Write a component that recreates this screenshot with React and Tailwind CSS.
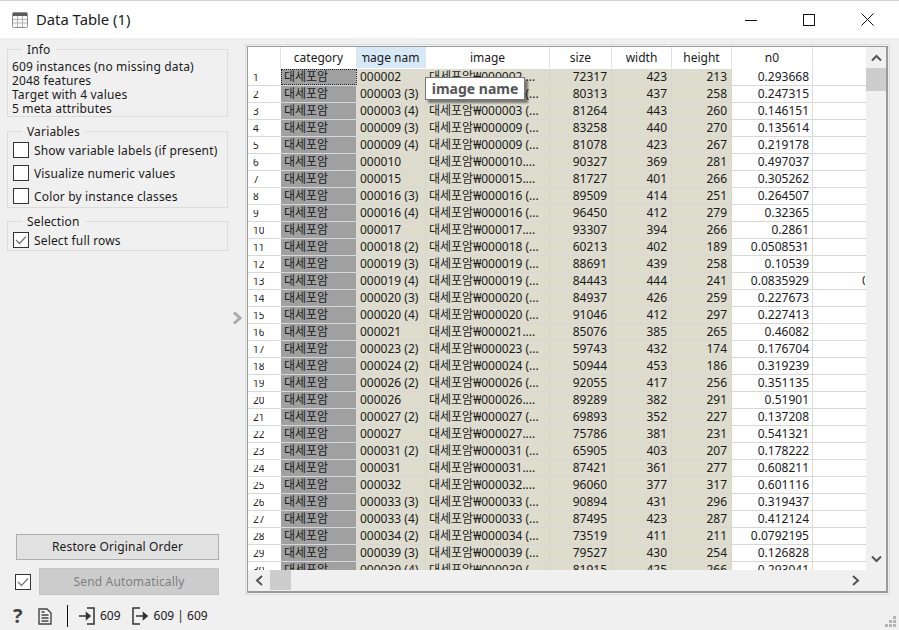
import React from "react";

const raw = `000002|72317|423|213|0.293668
000003 (3)|80313|437|258|0.247315
000003 (4)|81264|443|260|0.146151
000009 (3)|83258|440|270|0.135614
000009 (4)|81078|423|267|0.219178
000010|90327|369|281|0.497037
000015|81727|401|266|0.305262
000016 (3)|89509|414|251|0.264507
000016 (4)|96450|412|279|0.32365
000017|93307|394|266|0.2861
000018 (2)|60213|402|189|0.0508531
000019 (3)|88691|439|258|0.10539
000019 (4)|84443|444|241|0.0835929
000020 (3)|84937|426|259|0.227673
000020 (4)|91046|412|297|0.227413
000021|85076|385|265|0.46082
000023 (2)|59743|432|174|0.176704
000024 (2)|50944|453|186|0.319239
000026 (2)|92055|417|256|0.351135
000026|89289|382|291|0.51901
000027 (2)|69893|352|227|0.137208
000027|75786|381|231|0.541321
000031 (2)|65905|403|207|0.178222
000031|87421|361|277|0.608211
000032|96060|377|317|0.601116
000033 (3)|90894|431|296|0.319437
000033 (4)|87495|423|287|0.412124
000034 (2)|73519|411|211|0.0792195
000039 (3)|79527|430|254|0.126828
000039 (4)|81915|425|266|0.293041`;

const rows = raw.split("\n").map((l) => l.split("|"));

function imageText(name) {
  const [id, suffix] = name.split(" ");
  return suffix ? `대세포암₩${id} (...` : `대세포암₩${id}....`;
}

function Group({ title, className = "", children }) {
  return (
    <fieldset className={`border border-[#dcdcdc] ml-[7px] w-[221px] tracking-[0.16px] ${className}`}>
      <legend className="ml-[14px] px-[5px] leading-[13px] h-[13px] text-[#1a1a1a]">{title}</legend>
      {children}
    </fieldset>
  );
}

function Check({ label, checked }) {
  return (
    <div className="flex items-center h-[23px]">
      <div className="w-[16px] h-[16px] ml-[5px] mr-[5px] border border-[#333333] bg-white flex items-center justify-center shrink-0">
        {checked && (
          <svg width="12" height="10" viewBox="0 0 12 10" fill="none" stroke="#777777" strokeWidth="1.3">
            <path d="M1 5l3.5 3.5L11 1.5" />
          </svg>
        )}
      </div>
      <span className="whitespace-nowrap pt-[2px]">{label}</span>
    </div>
  );
}

function Header({ w, label, active, clip }) {
  return (
    <div className={`${w} h-full shrink-0 flex justify-center items-center overflow-hidden border-r border-[#e3e3e3] ${active ? "bg-[#d7e9f7]" : "bg-white"}`}>
      <div className={`flex justify-center overflow-hidden ${clip || ""}`}>
        <span className="shrink-0 whitespace-nowrap">{label}</span>
      </div>
    </div>
  );
}

function Row({ r, i }) {
  const cell = "h-full shrink-0 flex items-center whitespace-nowrap overflow-hidden border-r";
  const beige = "bg-[#dddccd] border-[#d6d6cc]";
  return (
    <div className="flex h-[17px] shrink-0 border-b border-[#d8d8d8]">
      <div className="w-[33px] h-full shrink-0 bg-white flex items-center pl-[5px]">
        <span className="block h-[7px] overflow-hidden text-[10px] leading-[7px] text-[#222222]">{i + 1}</span>
      </div>
      <div className={`${cell} w-[76px] bg-[#a0a0a0] border-[#dcdcdc] pl-[3px] ${i === 0 ? "outline-1 outline-dotted outline-offset-[-1px] outline-[#222222]" : ""}`}>대세포암</div>
      <div className={`${cell} w-[69px] pl-[3px] ${beige}`}>{r[0]}</div>
      <div className={`${cell} w-[124px] pl-[3px] ${beige}`}>{imageText(r[0])}</div>
      <div className={`${cell} w-[62px] justify-end pr-[4px] ${beige}`}>{r[1]}</div>
      <div className={`${cell} w-[60px] justify-end pr-[4px] ${beige}`}>{r[2]}</div>
      <div className={`${cell} w-[60px] justify-end pr-[4px] ${beige}`}>{r[3]}</div>
      <div className={`${cell} w-[81px] justify-end pr-[3px] bg-white border-[#dcdcdc]`}>{r[4]}</div>
      <div className="h-full shrink-0 w-[52px] bg-white flex items-center overflow-hidden whitespace-nowrap pl-[49px]">{i === 12 ? "0" : ""}</div>
    </div>
  );
}

export default function App() {
  return (
    <div
      className="w-[899px] h-[630px] overflow-hidden bg-[#f0f0f0] flex flex-col text-[12px] text-[#1a1a1a]"
      style={{ fontFamily: '"Noto Sans", "Noto Sans CJK KR", sans-serif' }}
    >
      {/* Title bar */}
      <div className="h-[38px] bg-white flex items-center shrink-0 border-t border-[#8a8a8a]/40">
        <svg className="ml-[12px]" width="16" height="16" viewBox="0 0 16 16" fill="none">
          <rect x="0.5" y="0.5" width="15" height="15" rx="1" fill="#fafafa" stroke="#8f8f8f" />
          <rect x="1" y="1" width="14" height="3" fill="#5c5c5c" />
          <path d="M1 7.5h14M1 11h14M5.5 4v11M10.5 4v11" stroke="#b5b5b5" />
        </svg>
        <span className="ml-[8px] text-[14.8px] text-[#1a1a1a]">Data Table (1)</span>
        <div className="ml-auto flex mr-[2px] h-full items-center">
          <div className="w-[58px] flex justify-center">
            <svg width="12" height="12" viewBox="0 0 12 12"><path d="M0 6.5h12" stroke="#111" /></svg>
          </div>
          <div className="w-[58px] flex justify-center">
            <svg width="12" height="12" viewBox="0 0 12 12"><rect x="0.5" y="0.5" width="11" height="11" fill="none" stroke="#111" /></svg>
          </div>
          <div className="w-[59px] flex justify-center">
            <svg width="13" height="13" viewBox="0 0 13 13"><path d="M0.5 0.5l12 12M12.5 0.5l-12 12" stroke="#111" fill="none" /></svg>
          </div>
        </div>
      </div>

      {/* Main */}
      <div className="flex h-[559px] shrink-0">
        {/* Controls */}
        <div className="w-[228px] shrink-0 flex flex-col">
          <Group title="Info" className="mt-[5px] h-[74px]">
            <div className="pl-[4px] leading-[14px] pt-[4px]">
              <div>609 instances (no missing data)</div>
              <div>2048 features</div>
              <div>Target with 4 values</div>
              <div>5 meta attributes</div>
            </div>
          </Group>
          <Group title="Variables" className="mt-[8px] h-[83px]">
            <Check label="Show variable labels (if present)" />
            <Check label="Visualize numeric values" />
            <Check label="Color by instance classes" />
          </Group>
          <Group title="Selection" className="mt-[7px] h-[36px]">
            <Check label="Select full rows" checked />
          </Group>

          <div className="mt-auto mb-[2px] ml-[15px]">
            <div className="ml-px w-[203px] h-[26px] bg-[#e1e1e1] border border-[#adadad] flex items-center justify-center tracking-[0.16px]">Restore Original Order</div>
            <div className="flex items-center mt-[8px]">
              <div className="w-[16px] h-[16px] border border-[#333333] bg-white flex items-center justify-center">
                <svg width="12" height="10" viewBox="0 0 12 10" fill="none" stroke="#777777" strokeWidth="1.3">
                  <path d="M1 5l3.5 3.5L11 1.5" />
                </svg>
              </div>
              <div className="ml-[8px] w-[180px] h-[27px] bg-[#cccccc] border border-[#c4c4c4] text-[#7f7f7f] flex items-center justify-center tracking-[0.16px]">Send Automatically</div>
            </div>
          </div>
        </div>

        {/* Splitter handle */}
        <div className="w-[17px] shrink-0 flex items-center justify-center">
          <svg className="mt-[1px] ml-[2px]" width="11" height="14" viewBox="0 0 11 14" fill="none">
            <path d="M2 1.5L8 7l-6 5.5" stroke="#a9a9a9" strokeWidth="3" />
          </svg>
        </div>

        {/* Table frame */}
        <div className="w-[645px] h-[551px] mt-[6px] border border-[#dcdcdc] p-[1px] shrink-0">
          <div className="relative w-full h-full border-2 border-l-1 border-t-1 border-[#9a9a9a] flex bg-[#f0f0f0] overflow-hidden">
            <div className="flex flex-col flex-1 min-w-0 relative">
              {/* Grid */}
              <div className="h-[523px] flex flex-col overflow-hidden bg-white">
                <div className="flex h-[22px] shrink-0 border-b border-transparent">
                  <Header w="w-[33px]" label="" />
                  <Header w="w-[76px]" label="category" />
                  <Header w="w-[69px]" label="image name" active clip="w-[58px]" />
                  <Header w="w-[124px]" label="image" />
                  <Header w="w-[62px]" label="size" />
                  <Header w="w-[60px]" label="width" />
                  <Header w="w-[60px]" label="height" />
                  <Header w="w-[81px]" label="n0" />
                  <div className="w-[52px] shrink-0 bg-white" />
                </div>
                {rows.map((r, i) => (
                  <Row key={i} r={r} i={i} />
                ))}
              </div>
              {/* Horizontal scrollbar */}
              <div className="h-[20px] shrink-0 bg-[#f0f0f0] flex items-center">
                <div className="w-[22px] flex justify-center">
                  <svg width="9" height="11" viewBox="0 0 9 11" fill="none"><path d="M7 1L2 5.5 7 10" stroke="#555555" strokeWidth="2" /></svg>
                </div>
                <div className="w-[21px] h-full bg-[#cdcdcd]" />
                <div className="ml-auto w-[22px] flex justify-center">
                  <svg width="9" height="11" viewBox="0 0 9 11" fill="none"><path d="M2 1l5 4.5L2 10" stroke="#555555" strokeWidth="2" /></svg>
                </div>
              </div>
            </div>
            {/* Vertical scrollbar */}
            <div className="w-[20px] shrink-0 bg-[#f0f0f0] flex flex-col">
              <div className="h-[21px] flex items-center justify-center">
                <svg width="11" height="8" viewBox="0 0 11 8" fill="none"><path d="M1 6.5l4.5-4.5L10 6.5" stroke="#555555" strokeWidth="2" /></svg>
              </div>
              <div className="h-[23px] bg-[#cdcdcd]" />
              <div className="mt-[457px] h-[21px] flex items-center justify-center">
                <svg width="11" height="8" viewBox="0 0 11 8" fill="none"><path d="M1 1.5L5.5 6 10 1.5" stroke="#555555" strokeWidth="2" /></svg>
              </div>
            </div>

            {/* Tooltip */}
            <div className="absolute left-[177px] top-[30px] w-[100px] h-[23px] bg-white border border-[#767676] flex items-center justify-center font-bold text-[14px] text-[#555555] shadow-[3px_3px_2px_rgba(0,0,0,0.45)] whitespace-nowrap">image name</div>
          </div>
        </div>
      </div>

      {/* Status bar */}
      <div className="flex-1 flex items-center relative pl-[13px] pt-[5px]">
        <span className="w-[13px] font-bold text-[20px] leading-none text-[#444444]">?</span>
        <svg className="ml-[12px]" width="14" height="17" viewBox="0 0 14 17" fill="none" stroke="#444444" strokeWidth="1.4">
          <path d="M1 1h8l4 4v11H1z" />
          <path d="M3.5 7h7M3.5 10h7M3.5 13h7M3.5 4h3" />
        </svg>
        <div className="ml-[15px] w-px h-[22px] bg-[#111111]" />
        <svg className="ml-[11px]" width="16" height="18" viewBox="0 0 16 18" fill="none" stroke="#333333" strokeWidth="1.5">
          <path d="M8 1h7v16H8" />
          <path d="M0 9h9" />
          <path d="M7.5 6l3.5 3-3.5 3z" fill="#333333" />
        </svg>
        <span className="ml-[5px]">609</span>
        <svg className="ml-[11px]" width="16" height="18" viewBox="0 0 16 18" fill="none" stroke="#333333" strokeWidth="1.5">
          <path d="M8 1H1v16h7" />
          <path d="M4 9h9" />
          <path d="M11.5 6L15 9l-3.5 3z" fill="#333333" />
        </svg>
        <span className="ml-[6px]">609 | 609</span>
        <svg className="absolute right-[3px] bottom-[3px]" width="11" height="11" viewBox="0 0 11 11" fill="#b5b5b5">
          <rect x="8" y="0" width="3" height="3" />
          <rect x="4" y="4" width="3" height="3" />
          <rect x="8" y="4" width="3" height="3" />
          <rect x="0" y="8" width="3" height="3" />
          <rect x="4" y="8" width="3" height="3" />
          <rect x="8" y="8" width="3" height="3" />
        </svg>
      </div>
    </div>
  );
}
